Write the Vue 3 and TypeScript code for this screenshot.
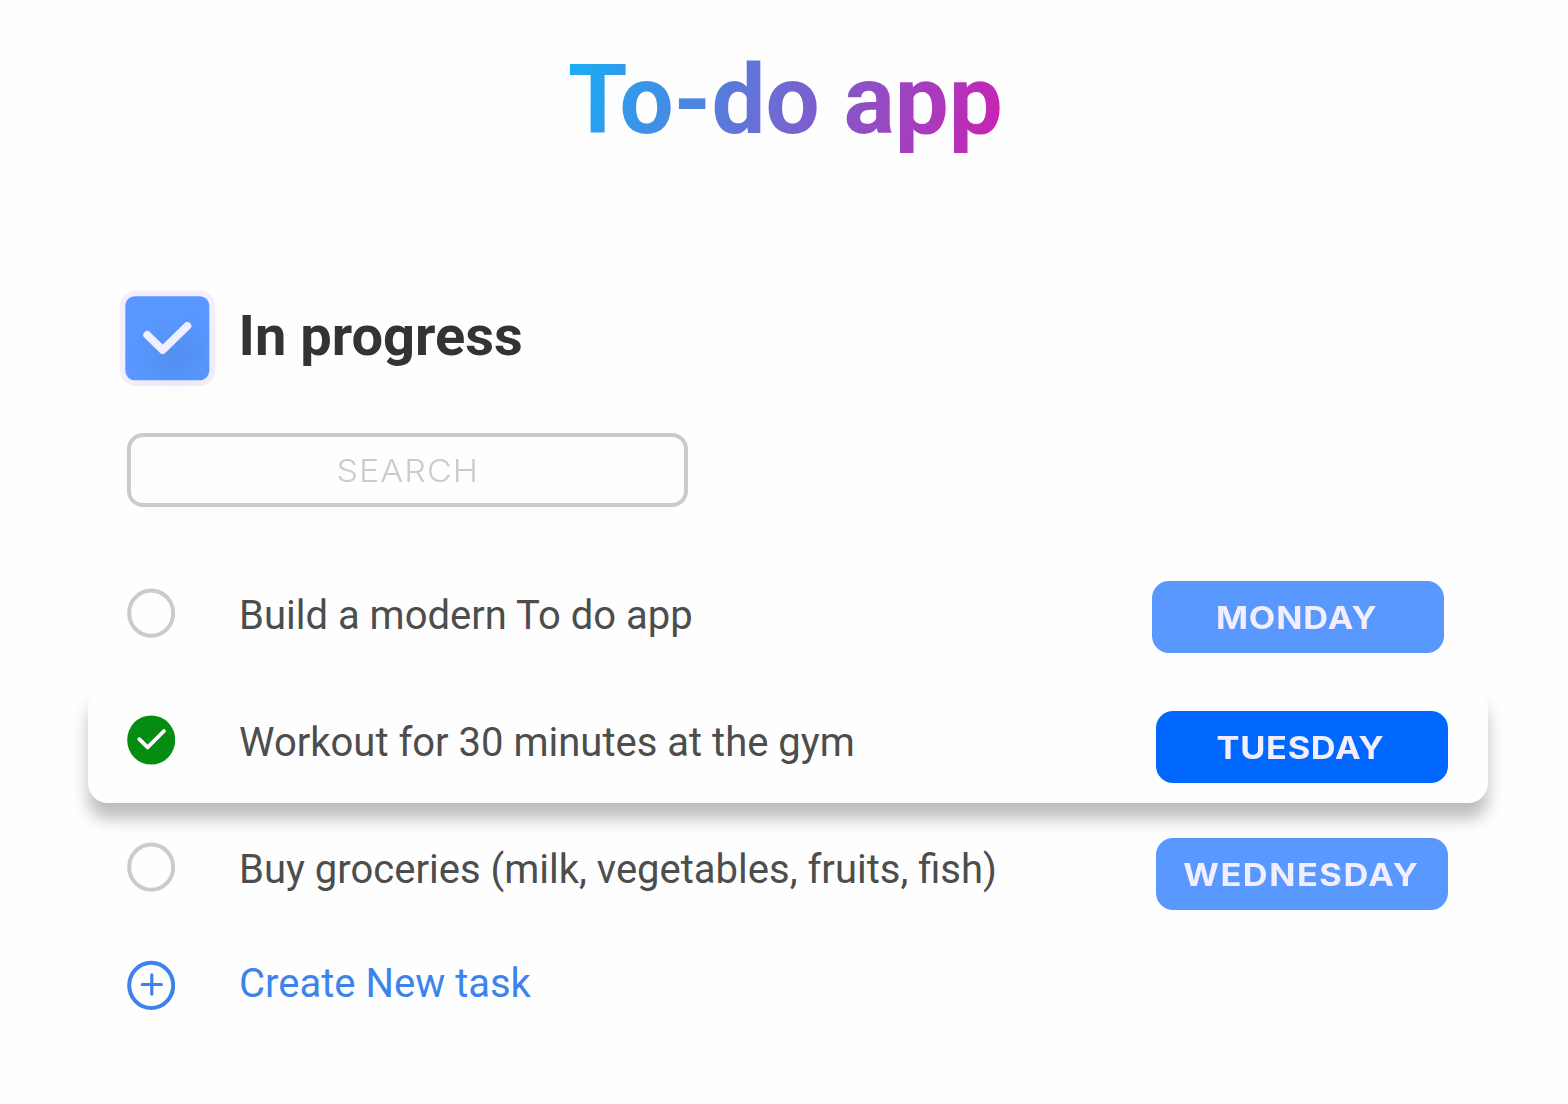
<script setup lang="ts">
interface Task {
  title: string
  day: string
  done: boolean
}

const tasks: Task[] = [
  { title: 'Build a modern To do app', day: 'Monday', done: false },
  { title: 'Workout for 30 minutes at the gym', day: 'Tuesday', done: true },
  { title: 'Buy groceries (milk, vegetables, fruits, fish)', day: 'Wednesday', done: false },
]
</script>

<template>
  <main class="app">
    <h1 class="title"><span class="gradient">To-do app</span></h1>

    <header class="section">
      <svg class="badge" width="120" height="120" viewBox="0 0 120 120">
        <rect x="9.8" y="10.5" width="95.5" height="95.5" rx="16" fill="#f2eefe" />
        <rect x="15.3" y="16.2" width="84" height="84" rx="9.5" fill="#5898ff" />
        <path class="tick" d="M37.3 55 L52.7 70 L77.3 46" />
      </svg>
      <h2 class="heading">In progress</h2>
    </header>

    <div class="search"><span class="search-label">SEARCH</span></div>

    <ul class="list">
      <li v-for="task in tasks" :key="task.day" class="row" :class="[task.day.toLowerCase(), { done: task.done }]">
        <svg class="mark" width="48" height="50" viewBox="0 0 48 50">
          <template v-if="task.done">
            <ellipse cx="24.2" cy="25" rx="24" ry="24.6" fill="#048d10" />
            <path d="M12.3 24.2 L20.6 32.4 L37 16" fill="none" stroke="#fff" stroke-width="3.8" stroke-linecap="round" stroke-linejoin="round" />
          </template>
          <ellipse v-else cx="24.2" cy="25.2" rx="22" ry="22.6" fill="none" stroke="#cbcbcb" stroke-width="4" />
        </svg>
        <span class="label">{{ task.title }}</span>
        <span class="day"><span class="day-name">{{ task.day.toUpperCase() }}</span></span>
      </li>
    </ul>

    <div class="create">
      <svg class="mark" width="48" height="50" viewBox="0 0 48 50">
        <ellipse cx="24.2" cy="25.3" rx="22" ry="22.6" fill="none" stroke="#3d83ee" stroke-width="4" />
        <path d="M15.2 24.5 H34.4 M24.8 14.9 V34.1" fill="none" stroke="#3d83ee" stroke-width="3.2" stroke-linecap="round" />
      </svg>
      <span class="label">Create New task</span>
    </div>
  </main>
</template>

<style>
body {
  background: #fefefe;
}
</style>

<style scoped>
.app {
  box-sizing: border-box;
  width: 1568px;
  height: 1104px;
  padding: 44px 80px 0 88px;
  overflow: hidden;
  font-family: Roboto, 'Liberation Sans', sans-serif;
  background: #fefefe;
}
.title {
  margin: 0 0 124px;
  padding-left: 480px;
  font-size: 96px;
  font-weight: 700;
  line-height: 112px;
  white-space: nowrap;
}
.gradient {
  display: inline-block;
  background: linear-gradient(105deg, #16b0f5 0%, #cb20b0 100%);
  background-clip: text;
  -webkit-background-clip: text;
  color: transparent;
  transform: translateY(0.4px);
}
.section {
  display: flex;
  height: 120px;
  padding-left: 22px;
}
.badge {
  flex: none;
  overflow: visible;
}
.tick {
  fill: none;
  stroke: #f2eefe;
  stroke-width: 8;
  stroke-linecap: round;
  stroke-linejoin: round;
  filter: drop-shadow(10px 17px 16px rgba(0, 0, 0, 0.25));
}
.heading {
  margin: 0 0 0 8.6px;
  font-size: 56px;
  font-weight: 700;
  line-height: 112px;
  color: #333;
}
.search {
  box-sizing: border-box;
  display: flex;
  align-items: center;
  justify-content: center;
  width: 561px;
  height: 74px;
  margin: 33px 0 0 39px;
  border: 4px solid #cbcbcb;
  border-radius: 16px;
}
.search-label {
  padding-top: 2px;
  font: 350 31px/40px Inter, 'Open Sans', sans-serif;
  letter-spacing: 0.9px;
  color: #cbcbcb;
  transform: scaleX(1.1);
}
.list {
  margin: 49px 0 0;
  padding: 0;
  list-style: none;
}
.row {
  box-sizing: border-box;
  display: flex;
  align-items: flex-start;
  width: 1400px;
  height: 120px;
  padding: 32px 40px 0 39px;
}
.mark {
  flex: none;
}
.label {
  flex: 1;
  margin-left: 64px;
  font-size: 40px;
  line-height: 56px;
  color: #4d4d4d;
  white-space: nowrap;
}
.row.monday {
  height: 131px;
  padding-right: 44px;
}
.row.tuesday {
  height: 116px;
  padding-top: 28px;
}
.row.wednesday {
  margin-top: 7px;
}
.done {
  border-radius: 20px;
  background: #fefefe;
  box-shadow: 0 16px 16px rgba(0, 0, 0, 0.25);
}
.day {
  flex: none;
  display: flex;
  align-items: center;
  justify-content: center;
  width: 292px;
  height: 72px;
  margin-top: -4px;
  border-radius: 17px;
  background: #5898ff;
}
.monday .day {
  margin-top: -7px;
}
.tuesday .day {
  background: #0068ff;
}
.day-name {
  padding: 2px 2px 0 0;
  font: 700 31px/40px Inter, 'Open Sans', sans-serif;
  letter-spacing: 0.8px;
  color: #f2eefe;
  transform: scaleX(1.11);
}
.tuesday .day-name {
  letter-spacing: 0.6px;
}
.wednesday .day-name {
  padding-right: 1px;
  letter-spacing: 1.36px;
}
.create {
  display: flex;
  margin-top: 26px;
  padding-left: 39px;
}
.create .mark {
  margin-top: 4px;
}
.create .label {
  color: #3d83ee;
}
</style>
